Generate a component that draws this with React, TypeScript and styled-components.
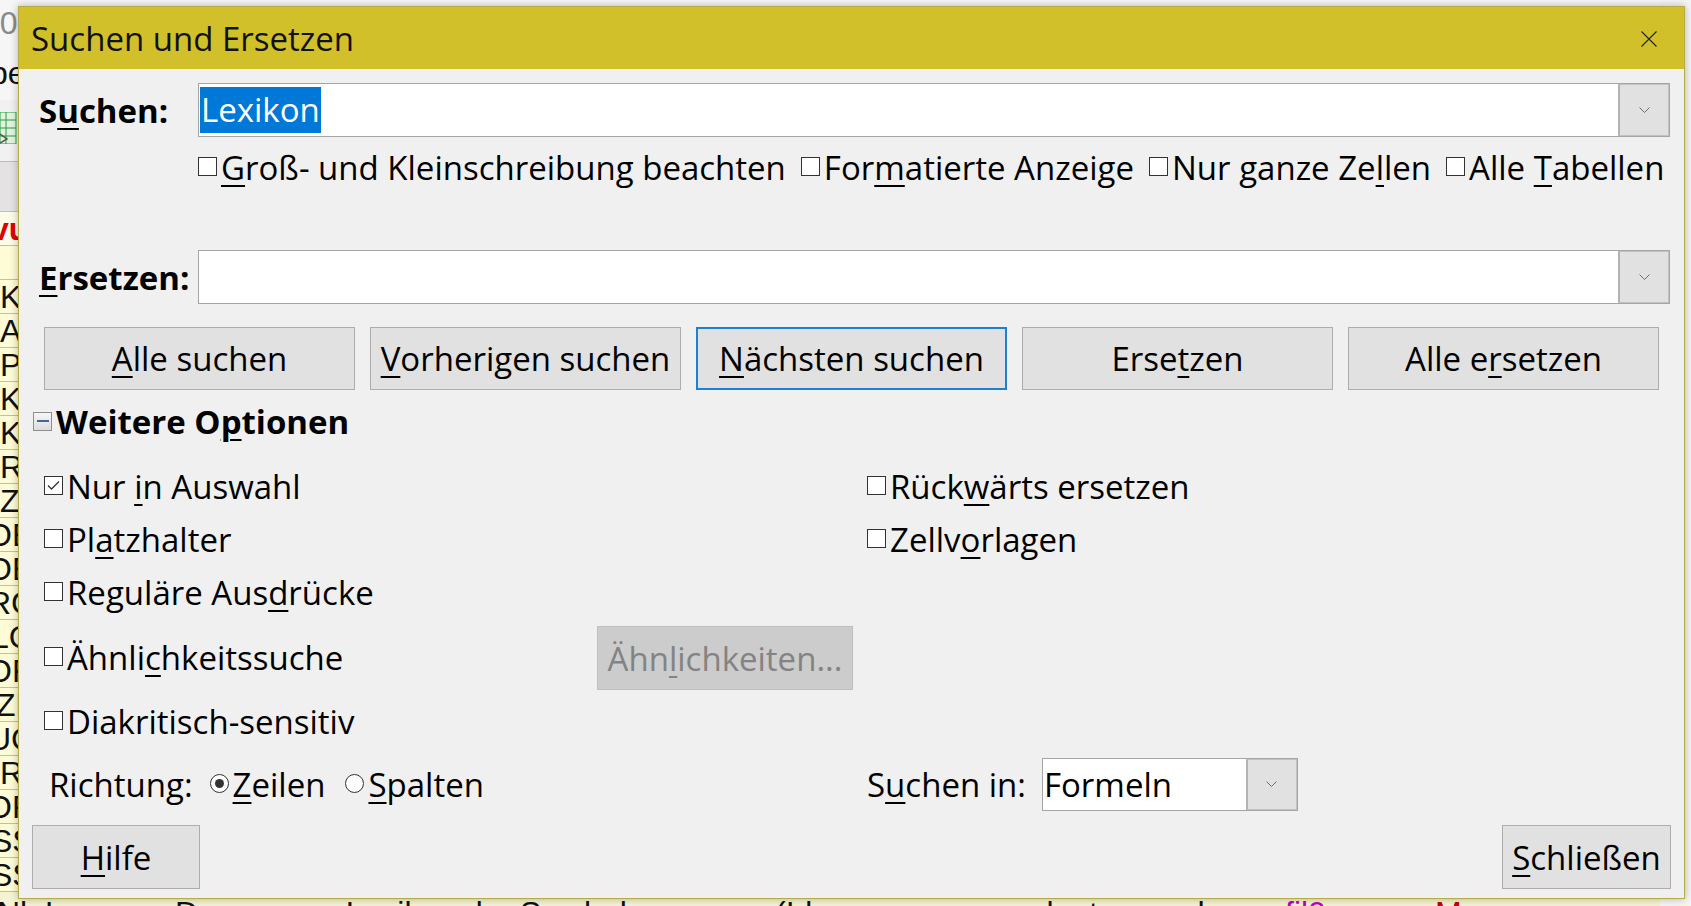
import React from 'react';
import styled, { createGlobalStyle } from 'styled-components';

const GlobalStyle = createGlobalStyle`
  html, body {
    margin: 0;
    padding: 0;
  }
  body {
    font-family: 'Open Sans', 'Noto Sans', sans-serif;
    font-size: 33px;
    color: #000;
    background: #f5f5f5;
  }
  * {
    box-sizing: border-box;
  }
`;

const Desk = styled.div`
  position: relative;
  width: 1691px;
  height: 906px;
  overflow: hidden;
  background: #f5f5f5;
`;

/* spreadsheet behind the dialog */
const Sheet = styled.div`
  display: flex;
  flex-direction: column;
  width: 1660px;
`;

const SheetRow = styled.div<{ $h: number; $bg: string; $line?: boolean; $top?: number }>`
  height: ${(p) => p.$h}px;
  background: ${(p) => p.$bg};
  border-bottom: ${(p) => (p.$line ? '1px solid #bdbdbd' : 'none')};
  display: flex;
  align-items: ${(p) => (p.$top !== undefined ? 'flex-start' : 'center')};
  padding-top: ${(p) => p.$top ?? 0}px;
  overflow: hidden;
  white-space: nowrap;
  line-height: 1;
`;

const CellText = styled.span<{ $color?: string; $bold?: boolean; $shift?: number; $w?: number }>`
  display: inline-block;
  width: ${(p) => (p.$w ? `${p.$w}px` : 'auto')};
  margin-left: ${(p) => p.$shift ?? 0}px;
  color: ${(p) => p.$color ?? '#111'};
  font-weight: ${(p) => (p.$bold ? 700 : 400)};
  font-family: 'Liberation Sans', Arial, sans-serif;
  font-size: 32px;
`;

/* dialog window */
const Dialog = styled.div`
  position: absolute;
  left: 18px;
  top: 6px;
  width: 1667px;
  height: 893px;
  background: #f0f0f0;
  border: 1px solid #b7ab45;
  box-shadow: 0 0 8px rgba(0, 0, 0, 0.28);
  display: flex;
  flex-direction: column;
`;

const TitleBar = styled.div`
  height: 62px;
  flex: none;
  background: #d2c02a;
  display: flex;
  align-items: center;
  justify-content: space-between;
  padding: 0 27px 0 12px;
`;

const TitleText = styled.span`
  font-size: 33px;
  color: #111;
`;

const CloseIcon = styled.svg`
  width: 16px;
  height: 16px;
  margin-top: 2px;
`;

const FieldGrid = styled.div`
  display: grid;
  grid-template-columns: 179px 1fr;
  grid-template-rows: 54px 113px 54px;
  padding-right: 14px;
  margin-top: 14px;
`;

const FieldLabel = styled.label`
  align-self: center;
  padding-left: 20px;
  font-weight: 700;
`;

const Combo = styled.div<{ $w?: number }>`
  display: flex;
  width: ${(p) => (p.$w ? `${p.$w}px` : 'auto')};
  height: ${(p) => (p.$w ? '53px' : 'auto')};
  background: #fff;
  border: 1px solid #a5a5a5;
`;

const ComboText = styled.div`
  flex: 1;
  display: flex;
  align-items: center;
  padding: 3px 1px;
  overflow: hidden;
  white-space: nowrap;
`;

const Selection = styled.span`
  display: inline-block;
  height: 46px;
  line-height: 46px;
  padding: 0 1px;
  background: #0078d7;
  color: #fff;
`;

const DropButton = styled.div<{ $w: number }>`
  width: ${(p) => p.$w}px;
  flex: none;
  background: #e1e1e1;
  border: 1px solid #c2c2c2;
  border-left: 2px solid #b2b2b2;
  display: flex;
  align-items: center;
  justify-content: center;
`;

const Chevron = styled.svg`
  width: 11px;
  height: 7px;
`;

const CheckRow = styled.div`
  grid-column: 2;
  display: flex;
  align-items: flex-start;
  gap: 15px;
  padding-top: 11px;
  white-space: nowrap;
`;

const CheckItem = styled.div`
  display: flex;
  align-items: flex-start;
  line-height: 40px;
  white-space: nowrap;
`;

const Box = styled.span`
  flex: none;
  width: 19px;
  height: 19px;
  margin: 9px 4px 0 0;
  background: #fff;
  border: 1px solid #333;
  display: flex;
  align-items: center;
  justify-content: center;
`;

const Radio = styled(Box)`
  border-radius: 50%;
  width: 19px;
  height: 19px;
`;

const RadioDot = styled.span`
  width: 9px;
  height: 9px;
  border-radius: 50%;
  background: #333;
`;

const Mn = styled.span`
  text-decoration: underline;
  text-decoration-thickness: 2px;
  text-underline-offset: 5px;
`;

const ButtonRow = styled.div`
  display: grid;
  grid-template-columns: repeat(5, 1fr);
  gap: 15px;
  height: 63px;
  margin-top: 23px;
  padding: 0 25px;
`;

const Button = styled.button<{ $focus?: boolean; $w?: number }>`
  font: inherit;
  color: #000;
  width: ${(p) => (p.$w ? `${p.$w}px` : 'auto')};
  height: ${(p) => (p.$w ? '64px' : 'auto')};
  background: #e1e1e1;
  border: ${(p) => (p.$focus ? '2px solid #1f7fd0' : '1px solid #adadad')};
  padding: 0;
  line-height: 1;
  display: flex;
  align-items: center;
  justify-content: center;
  white-space: nowrap;
  &:disabled {
    background: #cccccc;
    border-color: #bfbfbf;
    color: #838383;
  }
`;

const Expander = styled.div`
  display: flex;
  align-items: center;
  height: 34px;
  margin-top: 14px;
  padding-left: 14px;
  font-weight: 700;
`;

const ExpanderBox = styled.span`
  width: 19px;
  height: 19px;
  margin-right: 4px;
  border: 1px solid #8e8e8e;
  background: linear-gradient(#f6f6f6, #dcdcdc);
  display: flex;
  align-items: center;
  justify-content: center;
  &::after {
    content: '';
    width: 12px;
    height: 2px;
    background: #4a62a0;
  }
`;

const OptionsGrid = styled.div`
  display: grid;
  grid-template-columns: 823px 1fr;
  grid-template-rows: 40px 40px 40px 63px 40px;
  row-gap: 13px;
  margin-top: 29px;
  padding-left: 25px;
`;

const SimilarRow = styled.div`
  display: grid;
  grid-template-columns: 553px 256px;
  align-items: center;
`;

const DirRow = styled.div`
  display: grid;
  grid-template-columns: 823px 1fr;
  height: 53px;
  margin-top: 16px;
  padding-left: 25px;
  align-items: center;
`;

const DirGroup = styled.div<{ $indent?: number }>`
  display: flex;
  align-items: center;
  padding-left: ${(p) => p.$indent ?? 0}px;
`;

const DirLabel = styled.span<{ $gap: number }>`
  margin-right: ${(p) => p.$gap}px;
  line-height: 40px;
`;

const RadioGap = styled.span`
  width: 20px;
`;

const Footer = styled.div`
  display: flex;
  justify-content: space-between;
  margin-top: 14px;
  padding: 0 13px;
`;

const sheetRows = [
  { h: 45, bg: '#f6f6f6', text: '10', color: '#8a8a8a', shift: -18 },
  { h: 55, bg: '#f6f6f6', text: 'be', shift: -10 },
  { h: 62, bg: '#f1f1f1', icon: true, line: true },
  { h: 50, bg: '#e3e3e3', text: '', line: true },
  { h: 34, bg: '#fdfce9', text: 'vu', color: '#e10000', bold: true, shift: -9, line: true },
  { h: 34, bg: '#fdfcd7', text: '', line: true },
  { h: 34, bg: '#fdfcd7', text: 'K', line: true },
  { h: 34, bg: '#fdfcd7', text: 'A', line: true },
  { h: 34, bg: '#fdfcd7', text: 'P', line: true },
  { h: 34, bg: '#fdfcd7', text: 'K', line: true },
  { h: 34, bg: '#fdfcd7', text: 'K', line: true },
  { h: 34, bg: '#fdfcd7', text: 'R', line: true },
  { h: 34, bg: '#fdfcd7', text: 'Z', line: true },
  { h: 34, bg: '#fdfcd7', text: 'OE', shift: -13, line: true },
  { h: 34, bg: '#fdfcd7', text: 'OE', shift: -13, line: true },
  { h: 34, bg: '#fdfcd7', text: 'RG', shift: -12, line: true },
  { h: 34, bg: '#fdfcd7', text: 'LC', shift: -9, line: true },
  { h: 34, bg: '#fdfcd7', text: 'OF', shift: -13, line: true },
  { h: 34, bg: '#fdfcd7', text: 'ZE', shift: -4, line: true },
  { h: 34, bg: '#fdfcd7', text: 'UC', shift: -12, line: true },
  { h: 34, bg: '#fdfcd7', text: 'R', line: true },
  { h: 34, bg: '#fdfcd7', text: 'OR', shift: -13, line: true },
  { h: 34, bg: '#fdfcd7', text: 'SS', shift: -9, line: true },
  { h: 34, bg: '#fdfcd7', text: 'SS', shift: -9, line: true },
];

function SheetIcon() {
  return (
    <svg width="18" height="32" viewBox="0 0 18 32" style={{ marginTop: -6 }}>
      <rect x="0" y="0" width="16" height="32" fill="#dff3df" stroke="#2f9a45" />
      {[8, 16, 24].map((y) => (
        <line key={y} x1="0" y1={y} x2="16" y2={y} stroke="#2f9a45" />
      ))}
      <line x1="6" y1="0" x2="6" y2="32" stroke="#2f9a45" />
      <path d="M0 22 L7 27 L0 31" fill="none" stroke="#555" strokeWidth="1.5" />
    </svg>
  );
}

function ChevronDown() {
  return (
    <Chevron viewBox="0 0 11 7">
      <path d="M0.5 0.5 L5.5 5.5 L10.5 0.5" fill="none" stroke="#6e6e6e" strokeWidth="1" />
    </Chevron>
  );
}

function Check({ checked, children }: { checked?: boolean; children: React.ReactNode }) {
  return (
    <CheckItem>
      <Box>
        {checked && (
          <svg width="13" height="11" viewBox="0 0 13 11">
            <path d="M1 5.5 L4.5 9 L12 1.5" fill="none" stroke="#333" strokeWidth="1.3" />
          </svg>
        )}
      </Box>
      <span>{children}</span>
    </CheckItem>
  );
}

function RadioOption({ on, children }: { on?: boolean; children: React.ReactNode }) {
  return (
    <CheckItem>
      <Radio>{on && <RadioDot />}</Radio>
      <span>{children}</span>
    </CheckItem>
  );
}

export default function App() {
  return (
    <Desk>
      <GlobalStyle />
      <Sheet>
        {sheetRows.map((r, i) => (
          <SheetRow key={i} $h={r.h} $bg={r.bg} $line={r.line}>
            {r.icon ? (
              <SheetIcon />
            ) : (
              <CellText $color={r.color} $bold={r.bold} $shift={r.shift}>
                {r.text}
              </CellText>
            )}
          </SheetRow>
        ))}
        <SheetRow $h={34} $bg="#f4f3d2" $top={5}>
          <CellText $shift={-3} $w={178}>Nk.Lex</CellText>
          <CellText $w={600}>Das grosse Lexikon der Symbole</CellText>
          <CellText $w={210}>(Ideogramm</CellText>
          <CellText $w={300}>= vgl. etwas sehr ...</CellText>
          <CellText $color="#c000c0" $w={150}>fil0</CellText>
          <CellText $color="#c00000">Ms</CellText>
        </SheetRow>
      </Sheet>

      <Dialog>
        <TitleBar>
          <TitleText>Suchen und Ersetzen</TitleText>
          <CloseIcon viewBox="0 0 16 16">
            <path d="M0.5 0.5 L15.5 15.5 M15.5 0.5 L0.5 15.5" stroke="#222" strokeWidth="1.1" />
          </CloseIcon>
        </TitleBar>

        <FieldGrid>
          <FieldLabel>
            S<Mn>u</Mn>chen:
          </FieldLabel>
          <Combo>
            <ComboText>
              <Selection>Lexikon</Selection>
            </ComboText>
            <DropButton $w={51}>
              <ChevronDown />
            </DropButton>
          </Combo>

          <CheckRow>
            <Check>
              <Mn>G</Mn>roß- und Kleinschreibung beachten
            </Check>
            <Check>
              For<Mn>m</Mn>atierte Anzeige
            </Check>
            <Check>
              Nur ganze Ze<Mn>l</Mn>len
            </Check>
            <Check>
              Alle <Mn>T</Mn>abellen
            </Check>
          </CheckRow>

          <FieldLabel>
            <Mn>E</Mn>rsetzen:
          </FieldLabel>
          <Combo>
            <ComboText />
            <DropButton $w={51}>
              <ChevronDown />
            </DropButton>
          </Combo>
        </FieldGrid>

        <ButtonRow>
          <Button>
            <Mn>A</Mn>lle suchen
          </Button>
          <Button>
            <Mn>V</Mn>orherigen suchen
          </Button>
          <Button $focus>
            <Mn>N</Mn>ächsten suchen
          </Button>
          <Button>
            Erse<Mn>t</Mn>zen
          </Button>
          <Button>
            Alle e<Mn>r</Mn>setzen
          </Button>
        </ButtonRow>

        <Expander>
          <ExpanderBox />
          <span>
            Weitere O<Mn>p</Mn>tionen
          </span>
        </Expander>

        <OptionsGrid>
          <Check checked>
            Nur <Mn>i</Mn>n Auswahl
          </Check>
          <Check>
            Rück<Mn>w</Mn>ärts ersetzen
          </Check>
          <Check>
            Pl<Mn>a</Mn>tzhalter
          </Check>
          <Check>
            Zellv<Mn>o</Mn>rlagen
          </Check>
          <Check>
            Reguläre Aus<Mn>d</Mn>rücke
          </Check>
          <div />
          <SimilarRow>
            <Check>
              Ähnli<Mn>c</Mn>hkeitssuche
            </Check>
            <Button disabled $w={256}>
              Ähn<Mn>l</Mn>ichkeiten...
            </Button>
          </SimilarRow>
          <div />
          <Check>Diakritisch-sensitiv</Check>
        </OptionsGrid>

        <DirRow>
          <DirGroup $indent={5}>
            <DirLabel $gap={17}>Richtung:</DirLabel>
            <RadioOption on>
              <Mn>Z</Mn>eilen
            </RadioOption>
            <RadioGap />
            <RadioOption>
              <Mn>S</Mn>palten
            </RadioOption>
          </DirGroup>
          <DirGroup>
            <DirLabel $gap={16}>
              S<Mn>u</Mn>chen in:
            </DirLabel>
            <Combo $w={256}>
              <ComboText>Formeln</ComboText>
              <DropButton $w={51}>
                <ChevronDown />
              </DropButton>
            </Combo>
          </DirGroup>
        </DirRow>

        <Footer>
          <Button $w={168}>
            <Mn>H</Mn>ilfe
          </Button>
          <Button $w={169}>
            <Mn>S</Mn>chließen
          </Button>
        </Footer>
      </Dialog>
    </Desk>
  );
}
